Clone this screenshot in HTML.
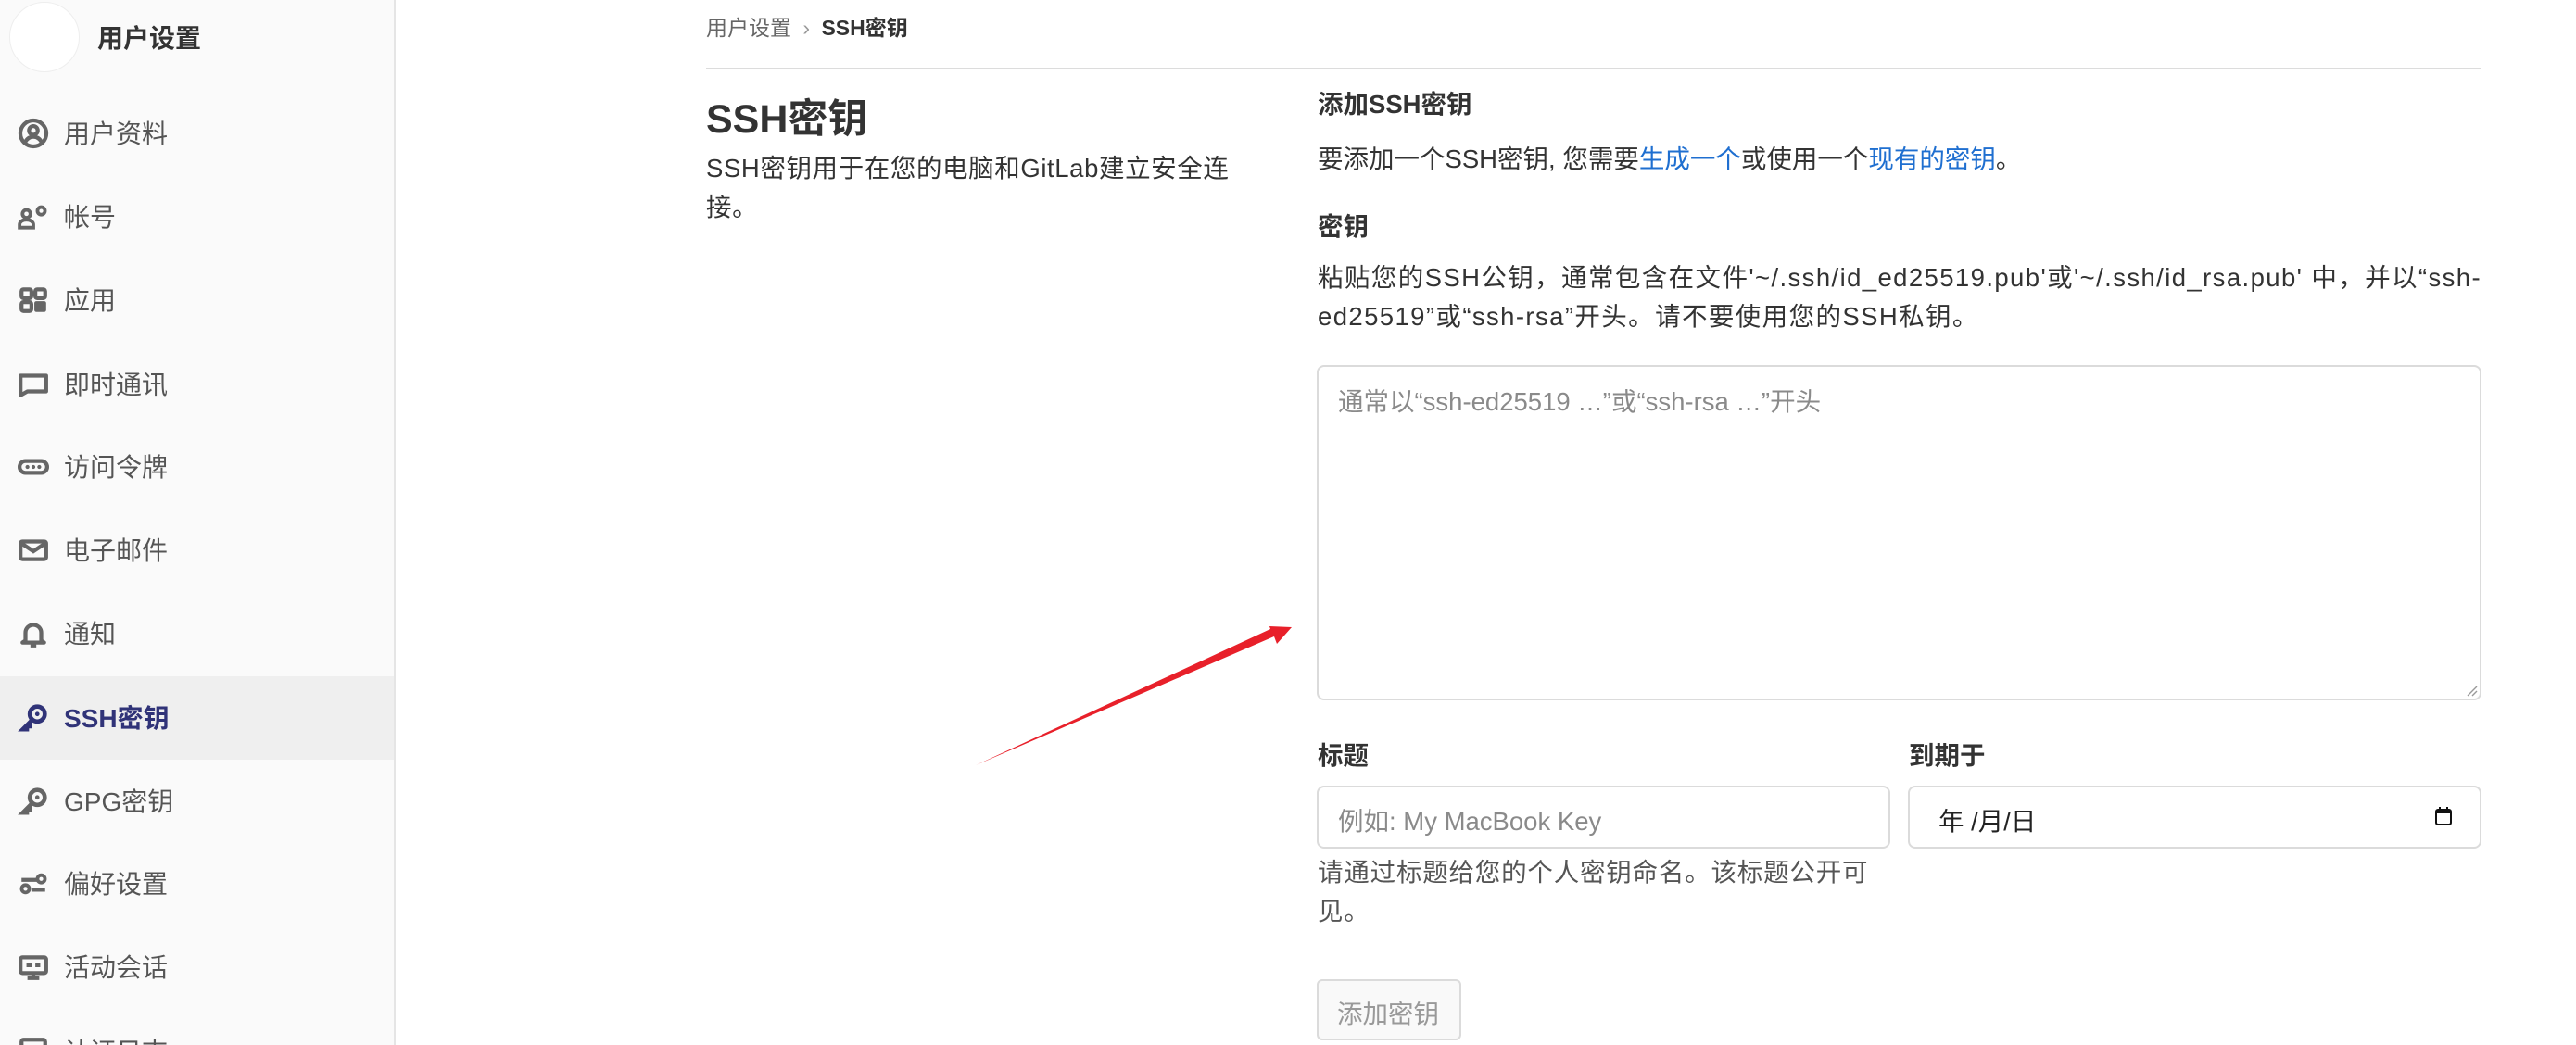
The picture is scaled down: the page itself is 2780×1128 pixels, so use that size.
<!DOCTYPE html>
<html><head><meta charset="utf-8">
<style>
*{box-sizing:border-box;margin:0;padding:0}
html,body{width:2780px;height:1128px;overflow:hidden;background:#fff;font-family:"Liberation Sans","Noto Sans CJK SC",sans-serif;color:#333}
.abs{position:absolute;white-space:nowrap}
#side{position:absolute;left:0;top:0;width:427px;height:1128px;background:#fafafa;border-right:2px solid #e5e5e5;overflow:hidden}
.nav{position:absolute;left:0;width:425px;height:90px;display:flex;align-items:center;font-size:28px;color:#555}
.nav svg{position:absolute;left:19px;width:34px;height:34px}
.nav span{position:absolute;left:69px;top:24px}
.nav.act{background:#efefef;color:#303378;font-weight:bold}
.in{position:absolute;border:2px solid #dbdbdb;border-radius:8px;background:#fff}
.t{font-size:27.5px}
.b{font-weight:bold;color:#333}
a{color:#1f6fd0;text-decoration:none}
</style></head><body>
<div id="side">
  <div class="abs" style="left:10px;top:2px;width:76px;height:76px;border-radius:50%;background:#fff;border:1px solid #eee"></div>
  <div class="abs" style="left:105px;top:20px;font-size:28px;font-weight:bold;color:#333">用户设置</div>

  <div class="nav" style="top:99px"><svg viewBox="0 0 16 16"><circle cx="8" cy="8" r="6.6" fill="none" stroke="#666" stroke-width="2"/><circle cx="8" cy="6.5" r="2.2" fill="none" stroke="#666" stroke-width="2"/><path d="M3.8 12.5c1-2 2.5-2.8 4.2-2.8s3.2.8 4.2 2.8" fill="none" stroke="#666" stroke-width="2"/></svg><span>用户资料</span></div>
  <div class="nav" style="top:189px"><svg viewBox="0 0 16 16"><circle cx="4.5" cy="6.5" r="2" fill="none" stroke="#666" stroke-width="1.8"/><path d="M1 13.5v-1.5c0-1.5 1.5-2.5 3.5-2.5S8 10.5 8 12v1.5z" fill="none" stroke="#666" stroke-width="1.8"/><circle cx="12" cy="5" r="2.8" fill="#666"/><circle cx="12" cy="5" r="1" fill="#fafafa"/></svg><span>帐号</span></div>
  <div class="nav" style="top:279px"><svg viewBox="0 0 16 16"><rect x="2" y="2.5" width="5" height="4.5" rx="1" fill="none" stroke="#666" stroke-width="2"/><rect x="9" y="2.5" width="5" height="4.5" rx="1" fill="none" stroke="#666" stroke-width="2"/><rect x="2" y="9" width="5" height="4.5" rx="1" fill="none" stroke="#666" stroke-width="2"/><rect x="8.5" y="8.5" width="6" height="5.5" rx="1" fill="#666"/></svg><span>应用</span></div>
  <div class="nav" style="top:370px"><svg viewBox="0 0 16 16"><path d="M1.5 3.5h13v8H5L1.5 13.5z" fill="none" stroke="#666" stroke-width="2" stroke-linejoin="round"/></svg><span>即时通讯</span></div>
  <div class="nav" style="top:459px"><svg viewBox="0 0 16 16"><rect x="1" y="5" width="14" height="6" rx="3" fill="none" stroke="#666" stroke-width="2"/><circle cx="5" cy="8" r="1" fill="#666"/><circle cx="8" cy="8" r="1" fill="#666"/><circle cx="11" cy="8" r="1" fill="#666"/></svg><span>访问令牌</span></div>
  <div class="nav" style="top:549px"><svg viewBox="0 0 16 16"><rect x="1.5" y="3.5" width="13" height="9" rx="1" fill="none" stroke="#666" stroke-width="2"/><path d="M2 4.5l6 4 6-4" fill="none" stroke="#666" stroke-width="2"/></svg><span>电子邮件</span></div>
  <div class="nav" style="top:639px"><svg viewBox="0 0 16 16"><path d="M4 11.5V7.5a4 4 0 018 0v4l1.5 1h-11z" fill="none" stroke="#666" stroke-width="2" stroke-linejoin="round"/><path d="M6.5 14h3" stroke="#666" stroke-width="2"/></svg><span>通知</span></div>
  <div class="nav act" style="top:730px"><svg viewBox="0 0 16 16"><circle cx="10" cy="6" r="3.8" fill="none" stroke="#303378" stroke-width="2.2"/><circle cx="10" cy="6" r="1.1" fill="#303378"/><path d="M7.3 8.7L2 14h3v-1.5h1.5V11z" fill="#303378" stroke="#303378" stroke-width="1.6"/></svg><span>SSH密钥</span></div>
  <div class="nav" style="top:820px"><svg viewBox="0 0 16 16"><circle cx="10" cy="6" r="3.8" fill="none" stroke="#666" stroke-width="2.2"/><circle cx="10" cy="6" r="1.1" fill="#666"/><path d="M7.3 8.7L2 14h3v-1.5h1.5V11z" fill="#666" stroke="#666" stroke-width="1.6"/></svg><span>GPG密钥</span></div>
  <div class="nav" style="top:909px"><svg viewBox="0 0 16 16"><path d="M2 6h8M7 11h7" stroke="#666" stroke-width="2"/><circle cx="12" cy="5.5" r="1.9" fill="none" stroke="#666" stroke-width="1.8"/><circle cx="4" cy="10.5" r="1.9" fill="none" stroke="#666" stroke-width="1.8"/></svg><span>偏好设置</span></div>
  <div class="nav" style="top:999px"><svg viewBox="0 0 16 16"><rect x="1.5" y="3" width="13" height="8" rx="1" fill="none" stroke="#666" stroke-width="2"/><path d="M4.5 7h3M9 7h2.5M5 13.5h6M8 11v2.5" stroke="#666" stroke-width="2"/></svg><span>活动会话</span></div>
  <div class="nav" style="top:1090px"><svg viewBox="0 0 16 16"><rect x="2" y="2" width="12" height="12" rx="1" fill="none" stroke="#666" stroke-width="2"/></svg><span>认证日志</span></div>
</div>

<div class="abs" style="left:762px;top:11px;font-size:23px;color:#666">用户设置 <span style="color:#999;margin:0 6px">›</span> <b style="color:#333">SSH密钥</b></div>
<div class="abs" style="left:762px;top:73px;width:1916px;height:2px;background:#dcdcdc"></div>

<div class="abs" style="left:762px;top:94px;font-size:43px;font-weight:bold;color:#333">SSH密钥</div>
<div class="abs t" style="left:762px;top:161px;line-height:42px;color:#333;letter-spacing:0.6px">SSH密钥用于在您的电脑和GitLab建立安全连<br>接。</div>

<div class="abs t b" style="left:1422px;top:90px">添加SSH密钥</div>
<div class="abs t" style="left:1422px;top:149px">要添加一个SSH密钥, 您需要<a>生成一个</a>或使用一个<a>现有的密钥</a>。</div>
<div class="abs t b" style="left:1422px;top:222px">密钥</div>
<div class="abs t" style="left:1422px;top:279px;line-height:42px;letter-spacing:1.4px">粘贴您的SSH公钥，通常包含在文件'~/.ssh/id_ed25519.pub'或'~/.ssh/id_rsa.pub' 中，并以“ssh-<br>ed25519”或“ssh-rsa”开头。请不要使用您的SSH私钥。</div>

<div class="in" style="left:1421px;top:394px;width:1257px;height:362px"></div>
<div class="abs t" style="left:1444px;top:411px;color:#8a8a8a">通常以“ssh-ed25519 …”或“ssh-rsa …”开头</div>
<svg class="abs" style="left:2660px;top:738px" width="14" height="14" viewBox="0 0 14 14"><path d="M13 3L3 13M13 8L8 13" stroke="#999" stroke-width="1.4"/></svg>

<div class="abs t b" style="left:1422px;top:793px">标题</div>
<div class="abs t b" style="left:2060px;top:793px">到期于</div>
<div class="in" style="left:1421px;top:848px;width:619px;height:68px"></div>
<div class="abs t" style="left:1444px;top:864px;color:#8a8a8a">例如: My MacBook Key</div>
<div class="in" style="left:2059px;top:848px;width:619px;height:68px"></div>
<div class="abs t" style="left:2092px;top:864px;color:#222">年 /月/日</div>
<svg class="abs" style="left:2626px;top:870px" width="22" height="22" viewBox="0 0 22 22"><rect x="3" y="4" width="16" height="16" rx="2" fill="none" stroke="#111" stroke-width="2"/><rect x="3" y="4" width="16" height="4" fill="#111"/><path d="M7 1v4M15 1v4" stroke="#111" stroke-width="2"/></svg>
<div class="abs t" style="left:1422px;top:921px;line-height:42px;color:#555;letter-spacing:0.8px">请通过标题给您的个人密钥命名。该标题公开可<br>见。</div>

<div class="abs" style="left:1421px;top:1057px;width:156px;height:66px;border:2px solid #dbdbdb;border-radius:6px;background:#f9f9f9"></div>
<div class="abs t" style="left:1443px;top:1072px;color:#999">添加密钥</div>

<svg class="abs" style="left:0;top:0" width="2780" height="1128"><polygon points="1053,826 1371,679 1370,676 1394,677 1378,695 1375,687" fill="#e8202a"/></svg>
</body></html>
